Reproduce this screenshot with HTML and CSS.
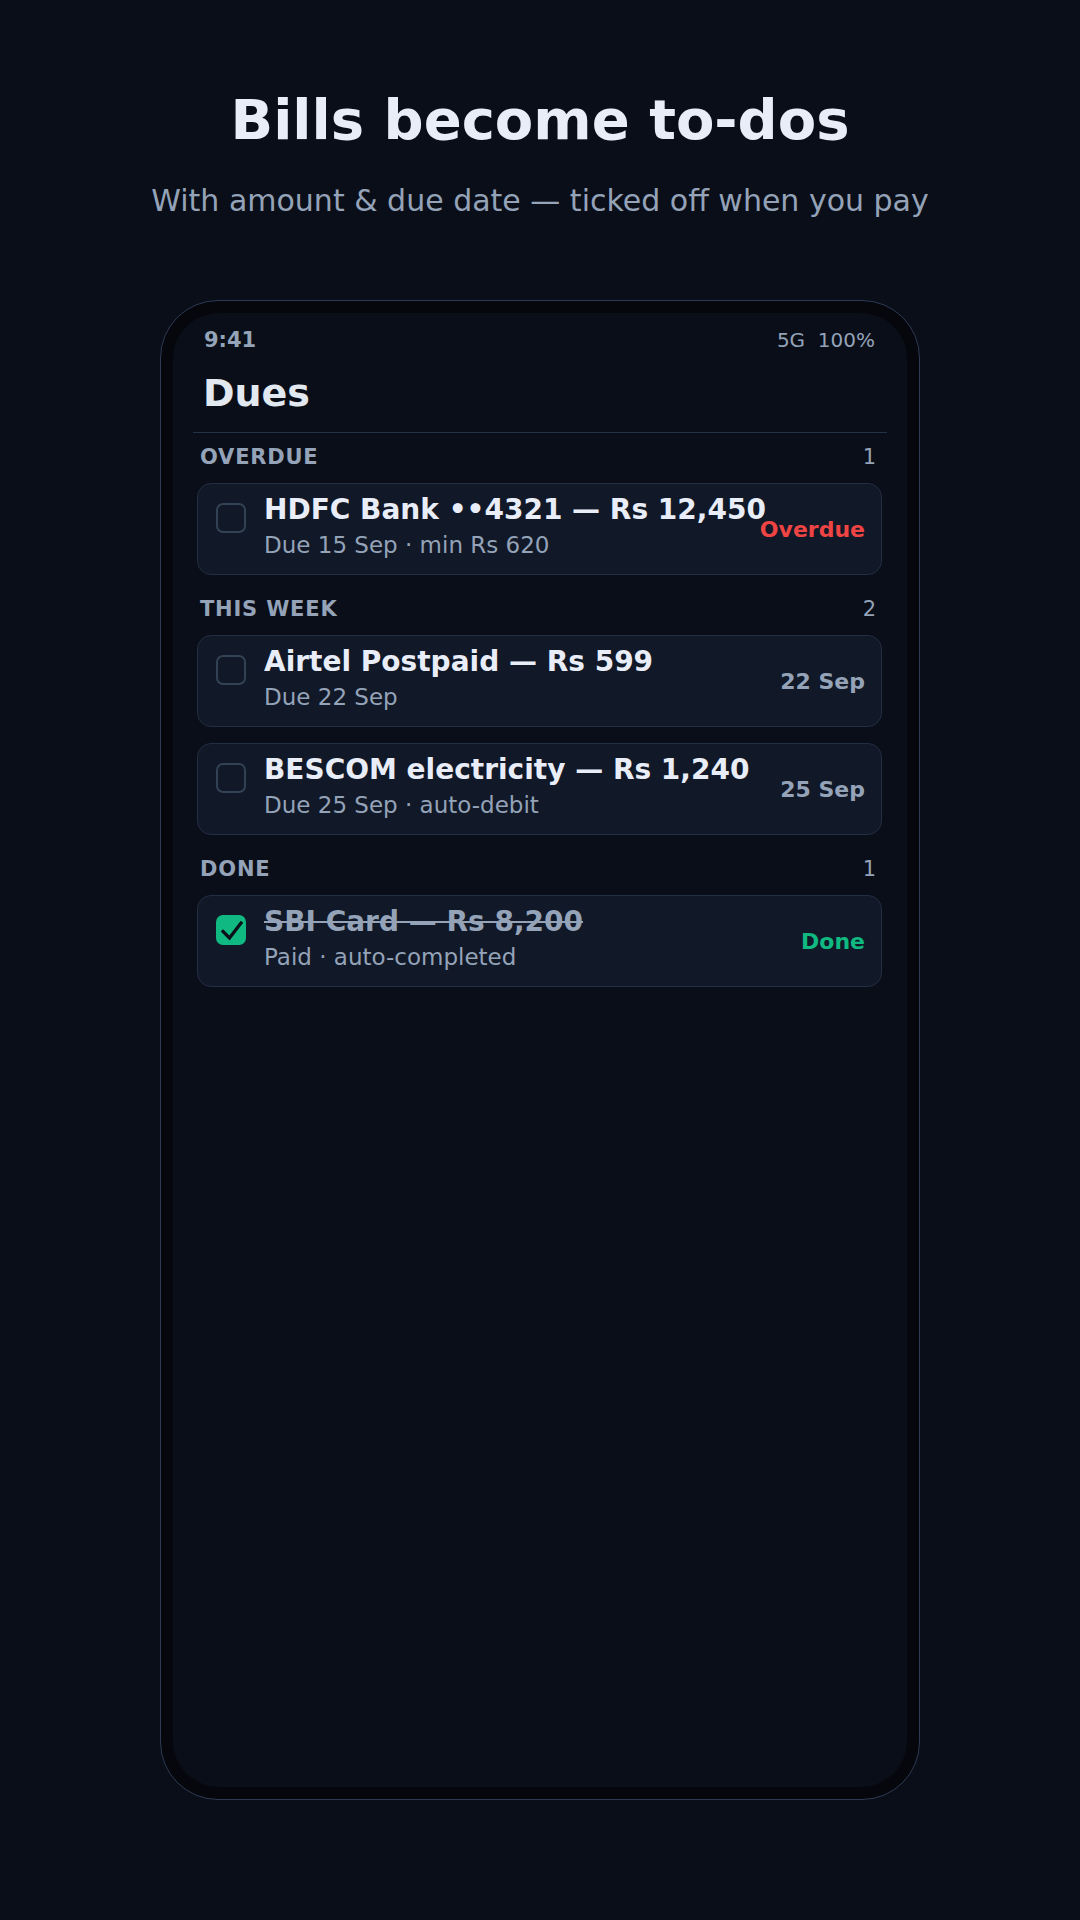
FILE: index.html
```html
<!DOCTYPE html>
<html lang="en">
<head>
  <meta charset="UTF-8" />
  <title>Bills become to-dos</title>
  <link rel="stylesheet" href="styles.css">
</head>
<body>

  <header class="hero">
    <h1>Bills become to-dos</h1>
    <p>With amount &amp; due date — ticked off when you pay</p>
  </header>

  <div class="phone">
    <div class="screen">
      <div class="status">
        <span class="time">9:41</span>
        <span class="net">5G&nbsp;&nbsp;100%</span>
      </div>

      <h2 class="titulo">Dues</h2>
      <div class="divider"></div>

      <div class="lista">
        <div class="seccion">
          <span>OVERDUE</span>
          <span class="cuenta">1</span>
        </div>
        <div class="card">
          <span class="check"></span>
          <div class="info">
            <div class="nombre">HDFC Bank ••4321 — Rs 12,450</div>
            <div class="detalle">Due 15 Sep · min Rs 620</div>
          </div>
          <span class="estado rojo">Overdue</span>
        </div>

        <div class="seccion">
          <span>THIS WEEK</span>
          <span class="cuenta">2</span>
        </div>
        <div class="card">
          <span class="check"></span>
          <div class="info">
            <div class="nombre">Airtel Postpaid — Rs 599</div>
            <div class="detalle">Due 22 Sep</div>
          </div>
          <span class="estado">22 Sep</span>
        </div>
        <div class="card">
          <span class="check"></span>
          <div class="info">
            <div class="nombre">BESCOM electricity — Rs 1,240</div>
            <div class="detalle">Due 25 Sep · auto-debit</div>
          </div>
          <span class="estado">25 Sep</span>
        </div>

        <div class="seccion">
          <span>DONE</span>
          <span class="cuenta">1</span>
        </div>
        <div class="card hecho">
          <span class="check on">
            <svg width="30" height="30" viewBox="0 0 30 30">
              <path d="M7 16.5 L13.5 23 L25 8" fill="none" stroke="#0b0f19" stroke-width="3.2" stroke-linecap="square" />
            </svg>
          </span>
          <div class="info">
            <div class="nombre">SBI Card — Rs 8,200</div>
            <div class="detalle">Paid · auto-completed</div>
          </div>
          <span class="estado verde">Done</span>
        </div>
      </div>
    </div>
  </div>

</body>
</html>
```

FILE: styles.css
```css
body {
  background: #0a0e19;
  font-family: 'DejaVu Sans', sans-serif;
  margin: 0;
  color: #e2e8f0;
}

.hero {
  text-align: center;
  padding-top: 86px;
}

.hero h1 {
  margin: 0;
  font-size: 56px;
  line-height: 68px;
  font-weight: bold;
  color: #e8edf8;
}

.hero p {
  margin: 29px 0 0;
  font-size: 30px;
  line-height: 36px;
  color: #94a3b8;
}

.phone {
  width: 734px;
  height: 1474px;
  margin: 81px auto 0;
  padding: 12px;
  border: 1px solid #2d3b55;
  border-radius: 58px;
  background: #05070c;
}

.screen {
  height: 100%;
  background: #0a0e19;
  border-radius: 46px;
  padding-top: 14px;
  box-sizing: border-box;
}

.status {
  display: flex;
  justify-content: space-between;
  padding: 0 32px 0 31px;
  line-height: 26px;
  color: #94a3b8;
}

.time {
  font-size: 21px;
  font-weight: bold;
}

.net {
  font-size: 20px;
}

.titulo {
  margin: 17px 0 0;
  padding-left: 30px;
  font-size: 38px;
  line-height: 46px;
  font-weight: bold;
  color: #e2e8f0;
}

.divider {
  height: 1px;
  margin: 16px 20px 0;
  background: #253147;
}

.lista {
  padding: 0 25px 0 24px;
}

.seccion {
  display: flex;
  justify-content: space-between;
  padding: 0 6px 0 3px;
  margin: 22px 0 14px;
  line-height: 24px;
  font-size: 21px;
  color: #94a3b8;
}

.seccion:first-child {
  margin-top: 12px;
}

.seccion span:first-child {
  font-weight: bold;
  letter-spacing: 0.8px;
}

.card {
  display: flex;
  align-items: flex-start;
  height: 92px;
  box-sizing: border-box;
  margin-bottom: 16px;
  padding: 11px 16px 14px 18px;
  background: #111827;
  border: 1px solid #232e42;
  border-radius: 14px;
}

.check {
  flex: none;
  width: 30px;
  height: 30px;
  margin-top: 8px;
  box-sizing: border-box;
  border: 2px solid #334155;
  border-radius: 7px;
}

.check.on {
  border: none;
  background: #10b981;
}

.check svg {
  display: block;
}

.info {
  flex: 1;
  min-width: 0;
  margin-left: 18px;
}

.nombre {
  font-size: 28px;
  line-height: 30px;
  font-weight: bold;
  color: #e8edf8;
  white-space: nowrap;
}

.detalle {
  margin-top: 5px;
  font-size: 23px;
  line-height: 30px;
  color: #94a3b8;
}

.estado {
  flex: none;
  align-self: center;
  margin-top: 4px;
  font-size: 22px;
  font-weight: bold;
  color: #94a3b8;
}

.rojo {
  color: #ef4444;
}

.verde {
  color: #10b981;
}

.hecho .nombre {
  color: #94a3b8;
  text-decoration: line-through;
  text-decoration-thickness: 2px;
}
```
